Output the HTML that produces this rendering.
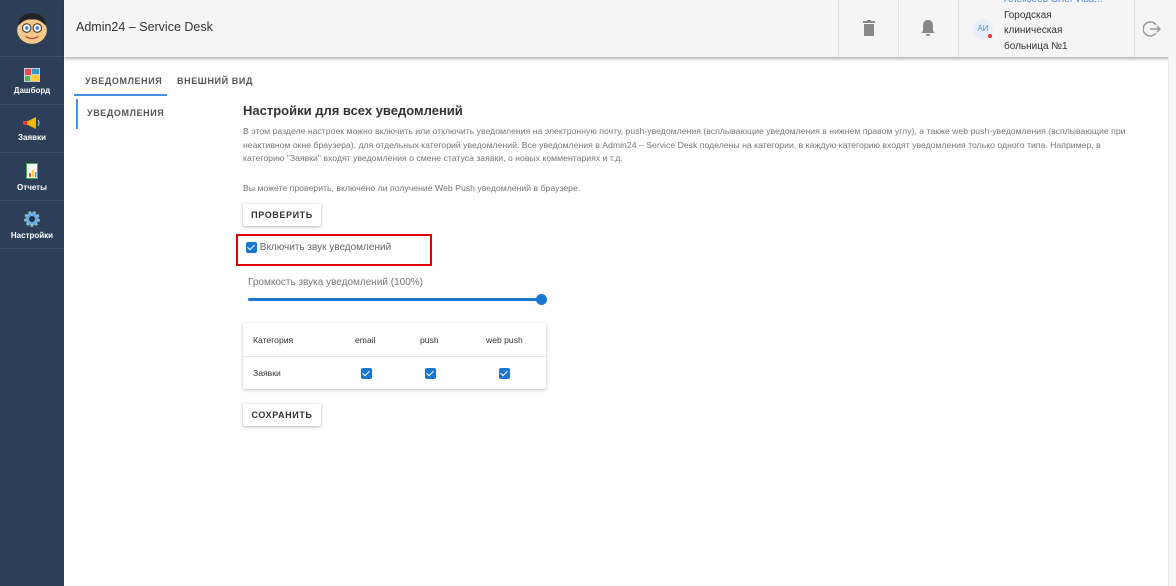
<!DOCTYPE html>
<html><head><meta charset="utf-8"><style>
*{box-sizing:border-box;margin:0;padding:0}
body{width:1176px;height:586px;overflow:hidden;font-family:"Liberation Sans",sans-serif;background:#fff;position:relative;color:#333}
.sb{position:absolute;left:0;top:0;width:64px;height:586px;background:#2d3e58}
.sb .logo{height:57px;border-bottom:1px solid #3d4f6b;display:flex;align-items:center;justify-content:center}
.sb .it{height:48px;border-bottom:1px solid #3d4f6b;display:flex;flex-direction:column;align-items:center;justify-content:center;color:#fff;font-size:8px;font-weight:bold;gap:3px}
.hd{position:absolute;left:64px;top:0;width:1112px;height:57px;background:#f5f5f5;box-shadow:0 2px 3px rgba(0,0,0,.3)}
.hd .t{position:absolute;left:12px;top:20px;font-size:12.5px;color:#333}
.cell{position:absolute;top:0;height:57px;border-left:1px solid #e0e0e0;overflow:hidden}
.tabs{position:absolute;left:74px;top:72px;font-size:9px;font-weight:bold;letter-spacing:.6px;color:#555}
.main{position:absolute;left:243px;top:0}
.btn{position:absolute;background:#fff;box-shadow:0 1px 3px rgba(0,0,0,.3);border-radius:2px;font-size:9px;font-weight:bold;letter-spacing:.6px;color:#333;text-align:center;line-height:22px;height:22px;width:78px}
.cb{display:inline-block;width:11px;height:11px;background:#1976d2;border-radius:2px;position:relative;vertical-align:middle}
.cb:after{content:"";position:absolute;left:3px;top:1px;width:3px;height:6px;border:solid #fff;border-width:0 1.5px 1.5px 0;transform:rotate(45deg)}
</style></head><body>
<div class="sb">
 <div class="logo"><svg width="36" height="36" viewBox="0 0 34 34"><ellipse cx="17" cy="19" rx="14" ry="13" fill="#f5c98a"/><path d="M4 15 Q5 3 17 3 Q29 3 30 15 Q24 8 17 9 Q10 8 4 15Z" fill="#222"/><circle cx="12" cy="17" r="4" fill="#fff" stroke="#333"/><circle cx="22" cy="17" r="4" fill="#fff" stroke="#333"/><circle cx="12" cy="17" r="1.6" fill="#3a7bd5"/><circle cx="22" cy="17" r="1.6" fill="#3a7bd5"/><path d="M11 25 Q17 29 23 25" stroke="#a33" fill="none"/></svg></div>
 <div class="it"><svg width="18" height="16"><rect x="1" y="1" width="16" height="14" fill="#ccd" /><rect x="2" y="2" width="6" height="6" fill="#e44"/><rect x="9" y="2" width="7" height="5" fill="#39c"/><rect x="2" y="9" width="5" height="5" fill="#4b4"/><rect x="9" y="8" width="7" height="6" fill="#fc3"/></svg>Дашборд</div>
 <div class="it"><svg width="20" height="14"><path d="M2 5h4l8-4v12l-8-4H2z" fill="#f5b800"/><rect x="1" y="5" width="4" height="4" fill="#e33"/><path d="M16 4q2 3 0 6" stroke="#ccc" fill="none"/></svg>Заявки</div>
 <div class="it"><svg width="16" height="18"><rect x="2" y="1" width="12" height="16" fill="#4a4"/><rect x="3" y="2" width="10" height="14" fill="#fff"/><rect x="5" y="11" width="2" height="4" fill="#e44"/><rect x="8" y="8" width="2" height="7" fill="#fc3"/><rect x="11" y="10" width="1.5" height="5" fill="#39c"/></svg>Отчеты</div>
 <div class="it"><svg width="18" height="18" viewBox="0 0 18 18"><circle cx="9" cy="9" r="6.5" fill="#6aa6e8" stroke="#8bc" stroke-width="3" stroke-dasharray="2.5 2"/><circle cx="9" cy="9" r="3" fill="#234"/></svg>Настройки</div>
</div>
<div class="hd"><div class="t">Admin24 – Service Desk</div>
 <div class="cell" style="left:774px;width:60px"><svg style="position:absolute;left:24px;top:20px" width="12" height="16"><rect x="0" y="1" width="12" height="2" fill="#888"/><rect x="4" y="0" width="4" height="2" fill="#888"/><rect x="1" y="4" width="10" height="12" fill="#888"/></svg></div>
 <div class="cell" style="left:834px;width:60px"><svg style="position:absolute;left:21px;top:19px" width="16" height="18"><path d="M8 1q-5 0-5 6v5l-2 2h14l-2-2V7q0-6-5-6z" fill="#888"/><rect x="6" y="15" width="4" height="2" rx="1" fill="#888"/></svg></div>
 <div class="cell" style="left:894px;width:176px">
  <div style="position:absolute;left:14px;top:19px;width:20px;height:20px;border-radius:50%;background:#e8eefa;color:#5b8fe0;font-size:8px;text-align:center;line-height:20px">АИ</div>
  <div style="position:absolute;left:29px;top:34px;width:4px;height:4px;border-radius:50%;background:#f33"></div>
  <div style="position:absolute;left:45px;top:-8px;font-size:10px;line-height:15.5px;color:#333;white-space:nowrap"><span style="color:#4a8ae0">Алексеев Олег Ива...</span><br>Городская<br>клиническая<br>больница №1<br><span style="color:#bbb;font-size:8px">ID: 12152</span></div>
 </div>
 <div class="cell" style="left:1070px;width:42px"><svg style="position:absolute;left:8px;top:20px" width="18" height="18"><path d="M13 5A7 7 0 1 0 13 13" stroke="#999" stroke-width="1.5" fill="none"/><path d="M7 9h10M14 6l3 3-3 3" stroke="#999" stroke-width="1.5" fill="none"/></svg></div>
</div>
<div class="tabs"><span style="position:absolute;left:11px;top:4px;white-space:nowrap">УВЕДОМЛЕНИЯ</span><span style="position:absolute;left:103px;top:4px;white-space:nowrap">ВНЕШНИЙ ВИД</span>
 <div style="position:absolute;left:0;top:22px;width:93px;height:2px;background:#4a90e2"></div>
 <div style="position:absolute;left:2px;top:27px;width:2px;height:30px;background:#4a90e2"></div>
 <span style="position:absolute;left:13px;top:36px;white-space:nowrap">УВЕДОМЛЕНИЯ</span></div>
<div class="main">
 <div style="position:absolute;top:103px;font-size:13px;font-weight:bold;white-space:nowrap;color:#333">Настройки для всех уведомлений</div>
 <div style="position:absolute;top:125px;width:896px;font-size:8.7px;line-height:13.5px;color:#777">В этом разделе настроек можно включить или отключить уведомления на электронную почту, push-уведомления (всплывающие уведомления в нижнем правом углу), а также web push-уведомления (всплывающие при неактивном окне браузера), для отдельных категорий уведомлений. Все уведомления в Admin24 – Service Desk поделены на категории, в каждую категорию входят уведомления только одного типа. Например, в категорию "Заявки" входят уведомления о смене статуса заявки, о новых комментариях и т.д.</div>
 <div style="position:absolute;top:183px;font-size:8.7px;color:#777;white-space:nowrap">Вы можете проверить, включено ли получение Web Push уведомлений в браузере.</div>
 <div class="btn" style="left:0;top:204px">ПРОВЕРИТЬ</div>
 <div style="position:absolute;left:-7px;top:234px;width:196px;height:32px;border:2px solid #e10000"></div>
 <div style="position:absolute;left:3px;top:242px;font-size:10px;color:#666;white-space:nowrap"><span class="cb"></span> Включить звук уведомлений</div>
 <div style="position:absolute;left:5px;top:277px;font-size:10px;color:#777;white-space:nowrap">Громкость звука уведомлений (100%)</div>
 <div style="position:absolute;left:5px;top:298px;width:294px;height:3px;background:#1976d2;border-radius:2px"></div>
 <div style="position:absolute;left:293px;top:294px;width:11px;height:11px;background:#1976d2;border-radius:50%"></div>
 <div style="position:absolute;left:0;top:323px;width:303px;height:66px;background:#fff;box-shadow:0 1px 3px rgba(0,0,0,.25);border-radius:2px;font-size:8.6px;color:#333">
  <div style="position:absolute;left:0;top:33px;width:100%;height:1px;background:#e5e5e5"></div>
  <span style="position:absolute;left:10px;top:12px">Категория</span><span style="position:absolute;left:112px;top:12px">email</span><span style="position:absolute;left:177px;top:12px">push</span><span style="position:absolute;left:243px;top:12px">web push</span>
  <span style="position:absolute;left:10px;top:45px">Заявки</span>
  <span class="cb" style="position:absolute;left:118px;top:45px"></span><span class="cb" style="position:absolute;left:182px;top:45px"></span><span class="cb" style="position:absolute;left:256px;top:45px"></span>
 </div>
 <div class="btn" style="left:0;top:404px">СОХРАНИТЬ</div>
</div>
<div style="position:absolute;left:1168px;top:57px;width:8px;height:529px;background:#f7f7f7;border-left:1px solid #ececec"></div>
</body></html>
